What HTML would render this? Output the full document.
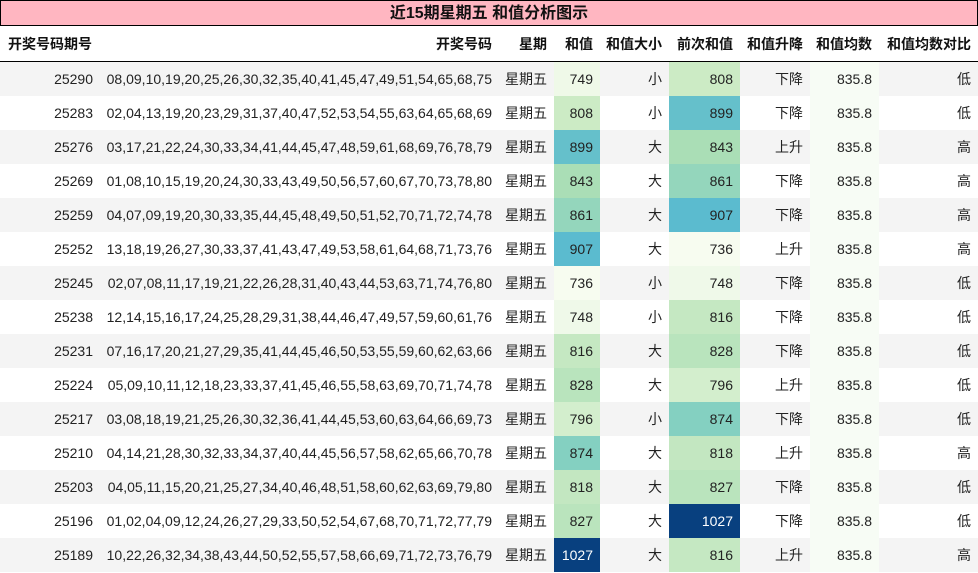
<!DOCTYPE html>
<html><head><meta charset="utf-8"><style>
body{margin:0;width:978px;height:573px;overflow:hidden;background:#fff;font-family:"Liberation Sans","Noto Sans CJK SC",sans-serif;color:#222;}
.title{position:absolute;left:0;top:0;width:976px;height:24px;background:#ffb6c1;border:1px solid #000;text-align:center;font-weight:bold;font-size:16px;line-height:25px;color:#111}
table{position:absolute;left:0;top:26px;border-collapse:collapse;table-layout:fixed;width:978px;font-size:14px}
td,th{padding:0 7px 0 0;text-align:right;height:34px;white-space:nowrap;overflow:hidden}
th{font-weight:bold;height:35px;border-bottom:1px solid #000;color:#111}
th.l{text-align:left;padding-left:8px}
tbody tr:nth-child(odd){background:#f4f4f4}
td.m{background:#f7fcf5}
</style></head><body>
<div class="title">近15期星期五 和值分析图示</div>
<table>
<colgroup><col style="width:100px"><col style="width:399px"><col style="width:55px"><col style="width:46px"><col style="width:69px"><col style="width:71px"><col style="width:70px"><col style="width:69px"><col style="width:99px"></colgroup>
<thead><tr><th class="l">开奖号码期号</th><th>开奖号码</th><th>星期</th><th>和值</th><th>和值大小</th><th>前次和值</th><th>和值升降</th><th>和值均数</th><th>和值均数对比</th></tr></thead>
<tbody>
<tr><td>25290</td><td>08,09,10,19,20,25,26,30,32,35,40,41,45,47,49,51,54,65,68,75</td><td>星期五</td><td style="background:#eff9e8">749</td><td>小</td><td style="background:#ccebc5">808</td><td>下降</td><td class="m">835.8</td><td>低</td></tr>
<tr><td>25283</td><td>02,04,13,19,20,23,29,31,37,40,47,52,53,54,55,63,64,65,68,69</td><td>星期五</td><td style="background:#ccebc5">808</td><td>小</td><td style="background:#65c0cb">899</td><td>下降</td><td class="m">835.8</td><td>低</td></tr>
<tr><td>25276</td><td>03,17,21,22,24,30,33,34,41,44,45,47,48,59,61,68,69,76,78,79</td><td>星期五</td><td style="background:#65c0cb">899</td><td>大</td><td style="background:#aadeb6">843</td><td>上升</td><td class="m">835.8</td><td>高</td></tr>
<tr><td>25269</td><td>01,08,10,15,19,20,24,30,33,43,49,50,56,57,60,67,70,73,78,80</td><td>星期五</td><td style="background:#aadeb6">843</td><td>大</td><td style="background:#94d6bc">861</td><td>下降</td><td class="m">835.8</td><td>高</td></tr>
<tr><td>25259</td><td>04,07,09,19,20,30,33,35,44,45,48,49,50,51,52,70,71,72,74,78</td><td>星期五</td><td style="background:#94d6bc">861</td><td>大</td><td style="background:#5bbbcf">907</td><td>下降</td><td class="m">835.8</td><td>高</td></tr>
<tr><td>25252</td><td>13,18,19,26,27,30,33,37,41,43,47,49,53,58,61,64,68,71,73,76</td><td>星期五</td><td style="background:#5bbbcf">907</td><td>大</td><td style="background:#f7fcf0">736</td><td>上升</td><td class="m">835.8</td><td>高</td></tr>
<tr><td>25245</td><td>02,07,08,11,17,19,21,22,26,28,31,40,43,44,53,63,71,74,76,80</td><td>星期五</td><td style="background:#f7fcf0">736</td><td>小</td><td style="background:#eff9e9">748</td><td>下降</td><td class="m">835.8</td><td>低</td></tr>
<tr><td>25238</td><td>12,14,15,16,17,24,25,28,29,31,38,44,46,47,49,57,59,60,61,76</td><td>星期五</td><td style="background:#eff9e9">748</td><td>小</td><td style="background:#c5e8c2">816</td><td>下降</td><td class="m">835.8</td><td>低</td></tr>
<tr><td>25231</td><td>07,16,17,20,21,27,29,35,41,44,45,46,50,53,55,59,60,62,63,66</td><td>星期五</td><td style="background:#c5e8c2">816</td><td>大</td><td style="background:#b9e4bd">828</td><td>下降</td><td class="m">835.8</td><td>低</td></tr>
<tr><td>25224</td><td>05,09,10,11,12,18,23,33,37,41,45,46,55,58,63,69,70,71,74,78</td><td>星期五</td><td style="background:#b9e4bd">828</td><td>大</td><td style="background:#d3eecd">796</td><td>上升</td><td class="m">835.8</td><td>低</td></tr>
<tr><td>25217</td><td>03,08,18,19,21,25,26,30,32,36,41,44,45,53,60,63,64,66,69,73</td><td>星期五</td><td style="background:#d3eecd">796</td><td>小</td><td style="background:#84d0c1">874</td><td>下降</td><td class="m">835.8</td><td>低</td></tr>
<tr><td>25210</td><td>04,14,21,28,30,32,33,34,37,40,44,45,56,57,58,62,65,66,70,78</td><td>星期五</td><td style="background:#84d0c1">874</td><td>大</td><td style="background:#c3e7c1">818</td><td>上升</td><td class="m">835.8</td><td>高</td></tr>
<tr><td>25203</td><td>04,05,11,15,20,21,25,27,34,40,46,48,51,58,60,62,63,69,79,80</td><td>星期五</td><td style="background:#c3e7c1">818</td><td>大</td><td style="background:#bae4bd">827</td><td>下降</td><td class="m">835.8</td><td>低</td></tr>
<tr><td>25196</td><td>01,02,04,09,12,24,26,27,29,33,50,52,54,67,68,70,71,72,77,79</td><td>星期五</td><td style="background:#bae4bd">827</td><td>大</td><td style="background:#08407f;color:#fff">1027</td><td>下降</td><td class="m">835.8</td><td>低</td></tr>
<tr><td>25189</td><td>10,22,26,32,34,38,43,44,50,52,55,57,58,66,69,71,72,73,76,79</td><td>星期五</td><td style="background:#08407f;color:#fff">1027</td><td>大</td><td style="background:#c5e8c2">816</td><td>上升</td><td class="m">835.8</td><td>高</td></tr>
</tbody></table>
</body></html>
